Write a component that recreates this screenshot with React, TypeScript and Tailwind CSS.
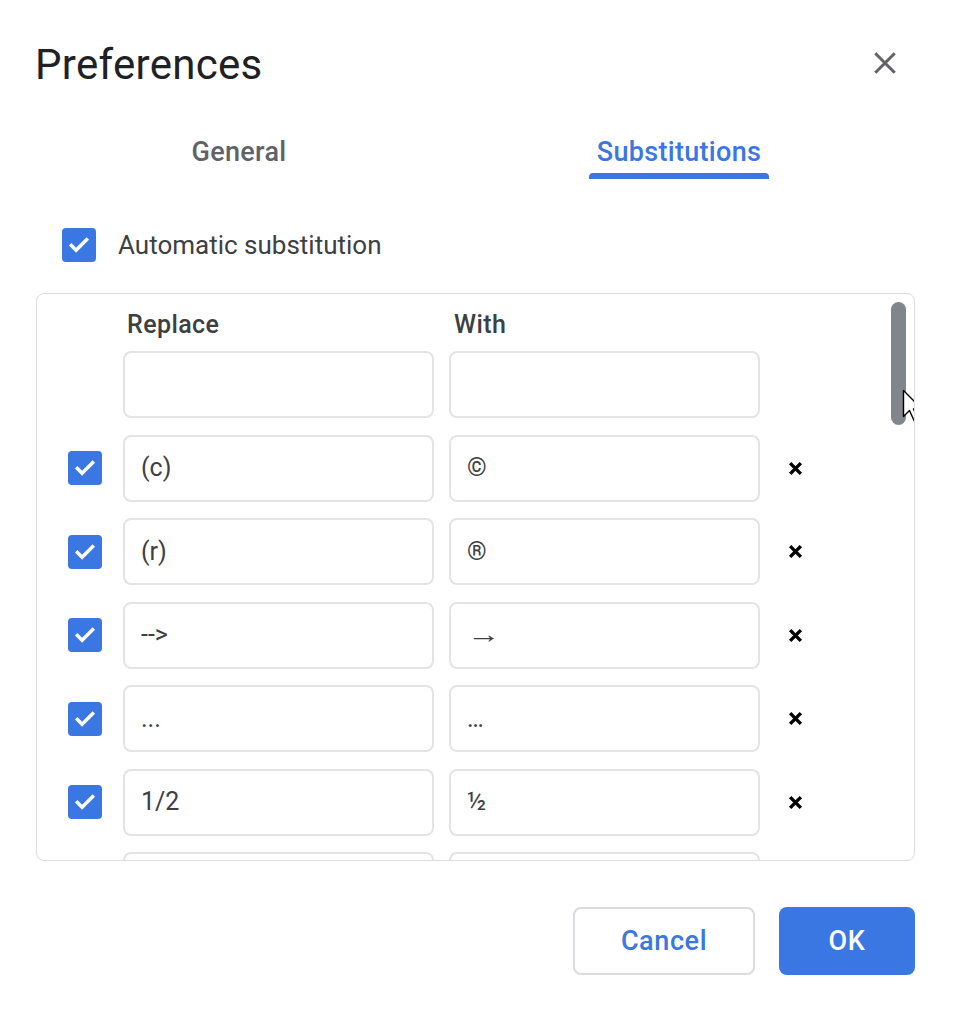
import { useState } from 'react';

const CloseIcon = ({ className }: { className?: string }) => (
    <svg className={className} viewBox="0 0 24 24" fill="none" stroke="currentColor">
        <path strokeWidth={2} d="M5.5 5.5l13 13M18.5 5.5l-13 13" />
    </svg>
);

const CheckIcon = ({ className }: { className?: string }) => (
    <svg className={className} viewBox="0 0 24 24" fill="none" stroke="currentColor">
        <path strokeWidth={3} strokeLinecap="square" d="M5.5 12.5l4 4 9-9" />
    </svg>
);

const DeleteIcon = ({ className }: { className?: string }) => (
    <svg className={className} viewBox="0 0 14 14" fill="none" stroke="currentColor">
        <path strokeWidth={3.2} d="M2 2l10 10M12 2L2 12" />
    </svg>
);

const Checkbox = ({ checked, onClick }: { checked: boolean; onClick: () => void }) => (
    <button
        type="button"
        onClick={onClick}
        className={`w-[34px] h-[34px] shrink-0 rounded-[4px] flex items-center justify-center ${checked ? 'bg-[#3b77e3]' : 'border-2 border-[#5f6368] bg-white'}`}
    >
        {checked && <CheckIcon className="w-[28px] h-[28px] text-white" />}
    </button>
);

const INITIAL_ROWS = [
    { replace: '(c)', with: '©' },
    { replace: '(r)', with: '®' },
    { replace: '-->', with: '→' },
    { replace: '...', with: '…' },
    { replace: '1/2', with: '½' },
    // only the top edge of this row shows above the fold
    { replace: '', with: '' },
];

export default function App() {
    const [tab, setTab] = useState<'general' | 'substitutions'>('substitutions');
    const [auto, setAuto] = useState(true);
    const [rows, setRows] = useState(INITIAL_ROWS.map(r => ({ ...r, on: true })));

    const toggleRow = (i: number) => {
        setRows(prev => prev.map((r, idx) => (idx === i ? { ...r, on: !r.on } : r)));
    };

    return (
        <div className="w-[955px] h-[1012px] bg-white relative font-['Roboto',sans-serif] text-[#3c4043]">
            <div className="pt-[39px] pl-[35px] pr-[40px] flex items-start justify-between">
                <h1 className="text-[42px] leading-[52px] tracking-[0.3px] text-[#202124]">Preferences</h1>
                <button type="button" className="mt-[6px] mr-[12px] text-[#5f6368]">
                    <CloseIcon className="w-[36px] h-[36px]" />
                </button>
            </div>

            <div className="mt-[45px] ml-[37px] flex gap-[36px]">
                {([
                    ['general', 'General'],
                    ['substitutions', 'Substitutions'],
                ] as const).map(([id, label]) => (
                    <button key={id} type="button" onClick={() => setTab(id)} className="w-[404px] flex justify-center">
                        <div className="flex flex-col items-stretch">
                            <span className={`px-2 text-[27px] leading-[32px] font-medium tracking-[0.3px] ${tab === id ? 'text-[#3b77e3]' : 'text-[#5f6368]'}`}>
                                {label}
                            </span>
                            <div className={`mt-[5px] h-[6px] rounded-t-[4px] ${tab === id ? 'bg-[#3b77e3]' : 'bg-transparent'}`} />
                        </div>
                    </button>
                ))}
            </div>

            <div className="mt-[49px] ml-[62px] flex items-center gap-[22px]">
                <Checkbox checked={auto} onClick={() => setAuto(!auto)} />
                <span className="text-[26px] leading-[30px]">Automatic substitution</span>
            </div>

            <div className="mt-[31px] ml-[36px] w-[879px] h-[568px] border border-[#dadce0] rounded-[8px] overflow-hidden relative">
                <div className="pt-[16px] pl-[31px]">
                    <div className="flex text-[25px] leading-[30px] font-medium tracking-[0.4px]">
                        <span className="ml-[59px] w-[326px]">Replace</span>
                        <span className="ml-[1px]">With</span>
                    </div>
                    <div className="mt-[11px] flex flex-col gap-[16.5px]">
                        <div className="flex items-center">
                            <div className="w-[34px]" />
                            <input className="ml-[21px] w-[311px] h-[67px] border-2 border-[#e3e4e6] rounded-[8px] px-[16px] text-[24px] outline-none" />
                            <input className="ml-[15px] w-[311px] h-[67px] border-2 border-[#e3e4e6] rounded-[8px] px-[16px] text-[24px] outline-none" />
                        </div>
                        {rows.map((row, i) => (
                            <div key={i} className="flex items-center">
                                <Checkbox checked={row.on} onClick={() => toggleRow(i)} />
                                <div className="ml-[21px] w-[311px] h-[67px] shrink-0 border-2 border-[#e3e4e6] rounded-[8px] px-[16px] flex items-center text-[25px]">
                                    {row.replace}
                                </div>
                                <div className="ml-[15px] w-[311px] h-[67px] shrink-0 border-2 border-[#e3e4e6] rounded-[8px] px-[16px] flex items-center text-[25px]">
                                    {row.with === '→' ? <span className="inline-block scale-x-[1.35] origin-left">{row.with}</span> : row.with}
                                </div>
                                <button type="button" className="ml-[28px] text-black">
                                    <DeleteIcon className="w-[15px] h-[15px]" />
                                </button>
                            </div>
                        ))}
                    </div>
                </div>
                <div className="absolute left-[854px] top-[8px] w-[15px] h-[123px] rounded-full bg-[#80868b]" />
                <svg className="absolute left-[865px] top-[95px] w-[22px] h-[34px]" viewBox="0 0 22 34">
                    <path d="M1.5 1.5v26l6-6 4.5 10 4-1.8-4.5-9.7h8.5z" fill="white" stroke="black" strokeWidth={1.4} strokeLinejoin="round" />
                </svg>
            </div>

            <div className="mt-[46px] pr-[40px] flex justify-end gap-[24px]">
                <button type="button" className="w-[182px] h-[68px] border-2 border-[#dadce0] rounded-[8px] text-[27px] font-medium tracking-[0.6px] text-[#3b77e3]">
                    Cancel
                </button>
                <button type="button" className="w-[136px] h-[68px] rounded-[8px] bg-[#3b77e3] text-[27px] font-medium tracking-[0.6px] text-white">
                    OK
                </button>
            </div>
        </div>
    );
}
